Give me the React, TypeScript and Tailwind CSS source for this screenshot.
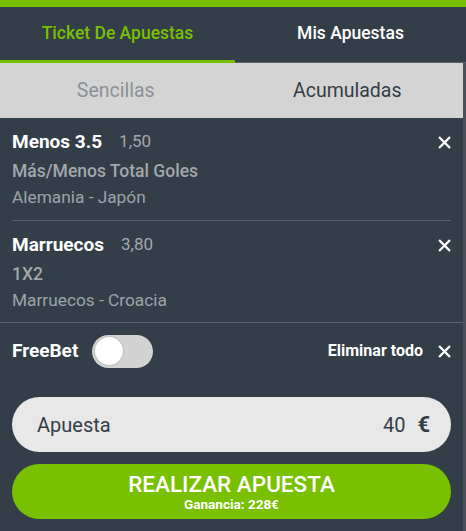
import { useState } from "react";

const bets = [
  { pick: "Menos 3.5", odds: "1,50", market: "Más/Menos Total Goles", event: "Alemania - Japón" },
  { pick: "Marruecos", odds: "3,80", market: "1X2", event: "Marruecos - Croacia" },
];

const CloseIcon = ({ className = "" }: { className?: string }) => (
  <svg viewBox="0 0 14 14" className={className} fill="none" stroke="currentColor" strokeWidth={2.4} strokeLinecap="square">
    <path d="M2 2l10 10M12 2L2 12" />
  </svg>
);

export default function App() {
  const [tab, setTab] = useState(0);
  const [mode, setMode] = useState(1);
  const [freebet, setFreebet] = useState(false);

  return (
    <div className="w-[466px] h-[531px] bg-[#333e48] flex flex-col font-['Roboto',sans-serif] overflow-hidden">
      <div className="h-[7px] bg-[#78be00]" />

      <div className="flex h-[56px] border-b border-[#5b646c]">
        {["Ticket De Apuestas", "Mis Apuestas"].map((t, i) => (
          <button
            key={t}
            onClick={() => setTab(i)}
            className={`${i === 0 ? "w-[235px]" : "flex-1"} flex items-center justify-center text-[17.5px] font-medium pb-[1px] border-b-[3px] -mb-[1px] ${
              tab === i ? "text-[#7ac000] border-[#78be00]" : "text-white border-transparent"
            }`}
          >
            {t}
          </button>
        ))}
      </div>

      <div className="flex-1 flex">
        <div className="flex-1 flex flex-col">
          <div className="flex h-[55px] bg-[#d4d4d4]">
            {["Sencillas", "Acumuladas"].map((t, i) => (
              <button
                key={t}
                onClick={() => setMode(i)}
                className={`flex-1 flex items-center justify-center text-[19.5px] ${
                  mode === i ? "text-[#343d47]" : "text-[#8b9196]"
                }`}
              >
                {t}
              </button>
            ))}
          </div>

          <div className="px-3">
            {bets.map((b, i) => (
              <div
                key={b.pick}
                className={`pt-[12px] ${i < bets.length - 1 ? "pb-[11px] border-b border-[#59626b]" : "pb-[10px]"}`}
              >
                <div className="flex items-center h-[24px]">
                  <span className="text-[19px] font-bold text-white">{b.pick}</span>
                  <span className="ml-[17px] text-[17px] text-[#a3a8ad]">{b.odds}</span>
                  <CloseIcon className="ml-auto w-[13px] h-[13px] text-white" />
                </div>
                <div className="mt-[5px] text-[17.5px] font-medium text-[#a2a7ac] leading-[24px]">{b.market}</div>
                <div className="mt-[2px] text-[17.3px] text-[#9ea3a8] leading-[24px]">{b.event}</div>
              </div>
            ))}
          </div>

          <div className="border-t border-[#5b646c] px-3">
            <div className="flex items-center h-[56px]">
              <span className="text-[19px] font-bold text-white">FreeBet</span>
              <button
                onClick={() => setFreebet(!freebet)}
                className={`ml-[14px] w-[61px] h-[33px] rounded-full p-[3px] flex ${freebet ? "bg-[#78be00] justify-end" : "bg-[#d3d3d3] justify-start"}`}
              >
                <span className="w-[28px] h-[28px] -mt-[0.5px] rounded-full bg-white shadow-[0_0_2px_rgba(0,0,0,0.3)]" />
              </button>
              <span className="ml-auto text-[16px] font-bold text-white">Eliminar todo</span>
              <CloseIcon className="ml-[15px] w-[13px] h-[13px] text-white" />
            </div>

            <div className="mt-[18px] h-[55px] rounded-full bg-[#e8e8e8] flex items-center pl-[25px] pr-[21px] text-[#343d47]">
              <span className="text-[20px]">Apuesta</span>
              <span className="ml-auto text-[20px]">40</span>
              <span className="ml-[12px] text-[22px] font-bold">€</span>
            </div>

            <button className="mt-[12px] w-full h-[55px] rounded-full bg-[#78c000] text-white flex flex-col items-center justify-center">
              <span className="text-[22.5px] font-medium leading-[26px]">REALIZAR APUESTA</span>
              <span className="text-[13.5px] font-bold leading-[15px]">Ganancia: 228€</span>
            </button>
          </div>
        </div>
        <div className="w-[3px] bg-[#4a5058]" />
      </div>
    </div>
  );
}
